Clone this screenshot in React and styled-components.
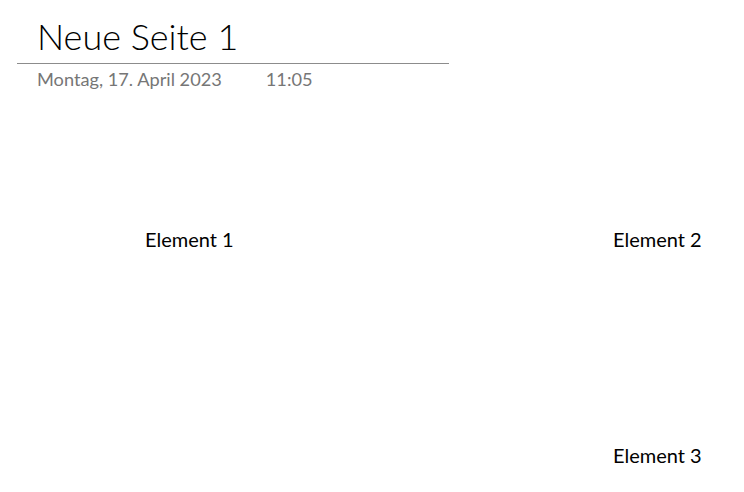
import React from 'react'
import styled, {createGlobalStyle} from 'styled-components'

const GlobalStyle = createGlobalStyle`
  html, body {
    margin: 0;
    padding: 0;
    background: #ffffff;
  }
  body {
    font-family: Lato, "Open Sans", sans-serif;
    width: 744px;
    height: 492px;
    overflow: hidden;
  }
`

const Page = styled.div`
  position: relative;
  width: 744px;
  height: 492px;
  background: #ffffff;
`

const TitleBlock = styled.header`
  width: 432px;
  margin-left: 17px;
  padding-top: 10px;
`

const Title = styled.h1`
  margin: 0;
  padding-left: 20px;
  height: 53px;
  font-family: Lato, sans-serif;
  font-weight: 300;
  font-size: 36px;
  line-height: 52px;
  color: #000000;
  border-bottom: 1px solid #8c8c8c;
`

const DateRow = styled.div`
  display: flex;
  gap: 44px;
  padding-left: 20px;
  margin-top: 3px;
  font-size: 18.2px;
  line-height: 24px;
  color: #767676;
`

const Canvas = styled.main`
  position: absolute;
  inset: 0;
  pointer-events: none;
`

const Outline = styled.div`
  position: absolute;
  left: ${p => p.$x}px;
  top: ${p => p.$y}px;
  font-size: 20px;
  line-height: 24px;
  color: #000000;
  white-space: nowrap;
`

const outlines = [
  {text: 'Element 1', x: 145, y: 227},
  {text: 'Element 2', x: 613, y: 227},
  {text: 'Element 3', x: 613, y: 443},
]

const App = () => {
  return (
    <Page>
      <GlobalStyle />
      <TitleBlock>
        <Title>Neue Seite 1</Title>
        <DateRow>
          <span>Montag, 17. April 2023</span>
          <span>11:05</span>
        </DateRow>
      </TitleBlock>
      <Canvas>
        {outlines.map(o => (
          <Outline key={o.text} $x={o.x} $y={o.y}>{o.text}</Outline>
        ))}
      </Canvas>
    </Page>
  )
}

export default App
